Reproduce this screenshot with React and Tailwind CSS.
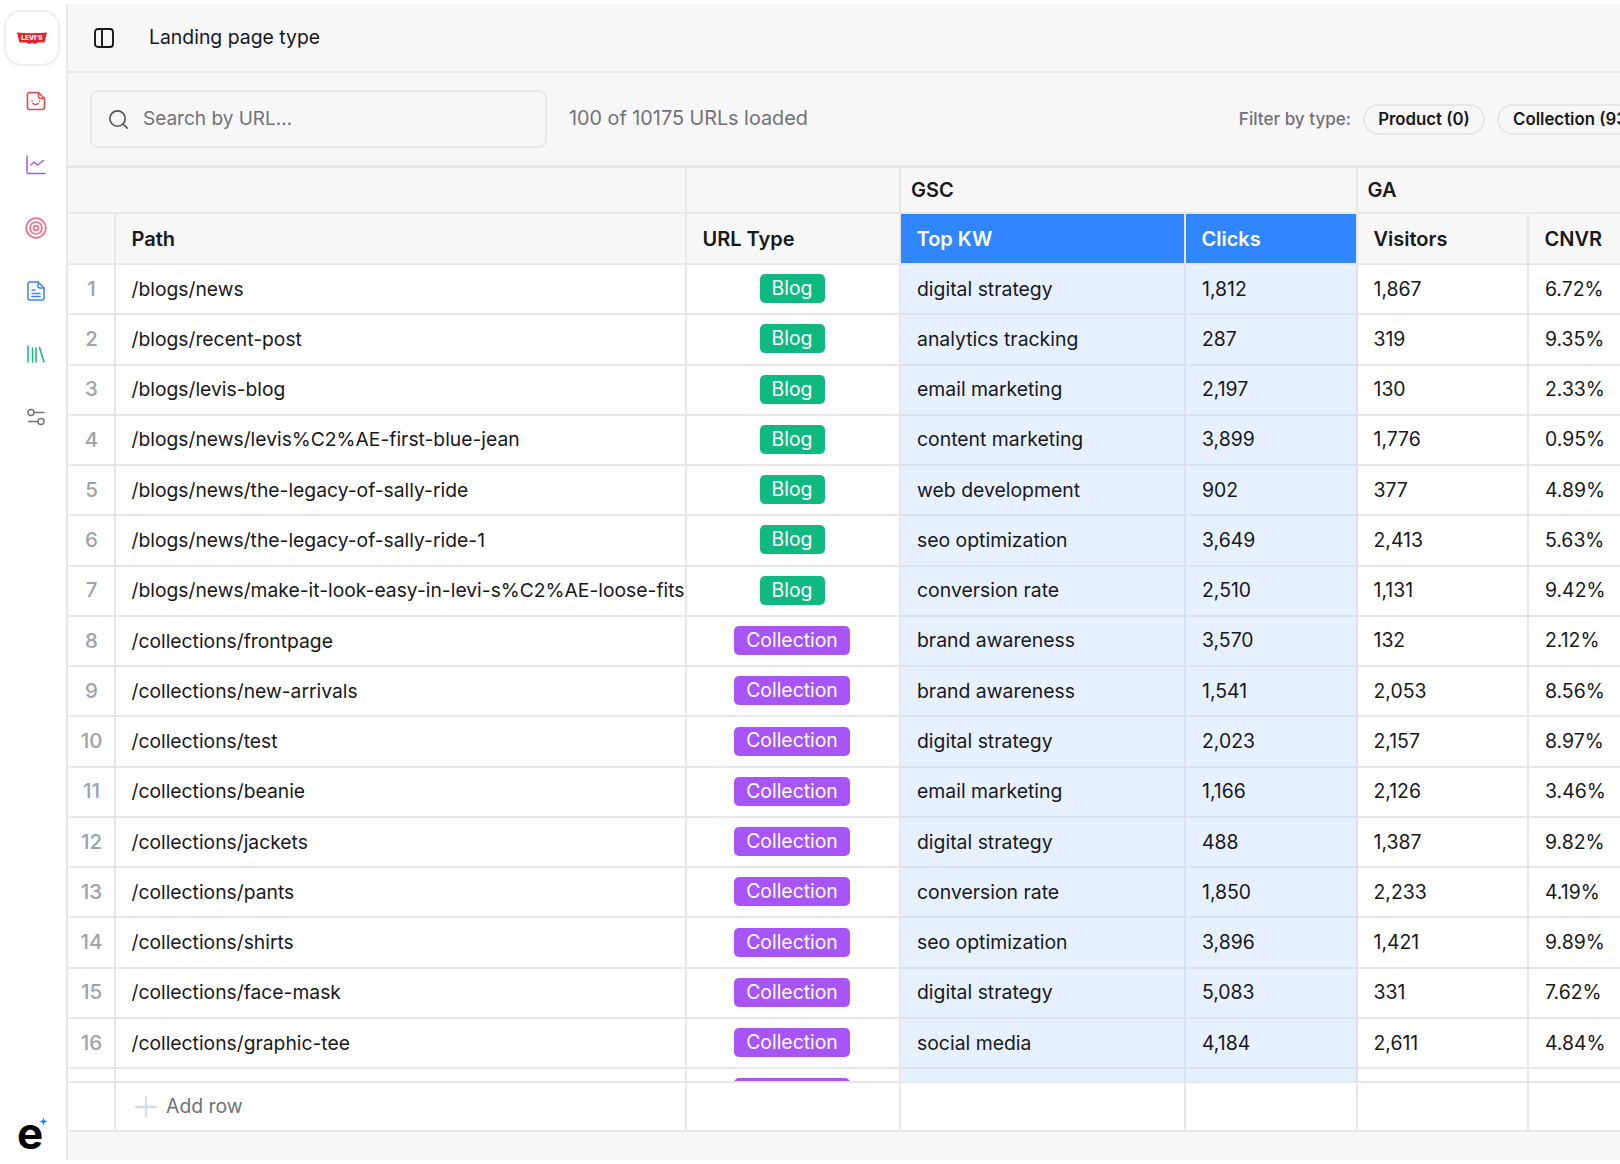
import { Search, Plus } from 'lucide-react';

const rows = [
    ['/blogs/news', 'Blog', 'digital strategy', '1,812', '1,867', '6.72%'],
    ['/blogs/recent-post', 'Blog', 'analytics tracking', '287', '319', '9.35%'],
    ['/blogs/levis-blog', 'Blog', 'email marketing', '2,197', '130', '2.33%'],
    ['/blogs/news/levis%C2%AE-first-blue-jean', 'Blog', 'content marketing', '3,899', '1,776', '0.95%'],
    ['/blogs/news/the-legacy-of-sally-ride', 'Blog', 'web development', '902', '377', '4.89%'],
    ['/blogs/news/the-legacy-of-sally-ride-1', 'Blog', 'seo optimization', '3,649', '2,413', '5.63%'],
    ['/blogs/news/make-it-look-easy-in-levi-s%C2%AE-loose-fits', 'Blog', 'conversion rate', '2,510', '1,131', '9.42%'],
    ['/collections/frontpage', 'Collection', 'brand awareness', '3,570', '132', '2.12%'],
    ['/collections/new-arrivals', 'Collection', 'brand awareness', '1,541', '2,053', '8.56%'],
    ['/collections/test', 'Collection', 'digital strategy', '2,023', '2,157', '8.97%'],
    ['/collections/beanie', 'Collection', 'email marketing', '1,166', '2,126', '3.46%'],
    ['/collections/jackets', 'Collection', 'digital strategy', '488', '1,387', '9.82%'],
    ['/collections/pants', 'Collection', 'conversion rate', '1,850', '2,233', '4.19%'],
    ['/collections/shirts', 'Collection', 'seo optimization', '3,896', '1,421', '9.89%'],
    ['/collections/face-mask', 'Collection', 'digital strategy', '5,083', '331', '7.62%'],
    ['/collections/graphic-tee', 'Collection', 'social media', '4,184', '2,611', '4.84%'],
    ['', 'Collection', '', '', '', ''],
];

function Badge({ type }) {
    if (type === 'Blog') {
        return <span className="flex h-[29px] w-[65px] items-center justify-center rounded-[5px] bg-[#10b981] text-[19.4px] text-white">Blog</span>;
    }
    return <span className="flex h-[29px] w-[116px] items-center justify-center rounded-[5px] bg-[#a855f7] text-[19.4px] text-white">Collection</span>;
}

function Row({ row, index }) {
    return (
        <div className="flex h-[50.28px] shrink-0 items-stretch bg-white text-[19.4px] text-[#18181b]">
            <div className="flex w-[47px] shrink-0 items-center justify-center border-r-2 border-b-2 border-[#e7e7e7] text-[20.5px] font-medium text-[#a1a1aa]">{index + 1}</div>
            <div className="flex w-[571px] shrink-0 items-center overflow-hidden whitespace-nowrap border-r-2 border-b-2 border-[#e7e7e7] pl-[15.5px] text-[19.3px]">{row[0]}</div>
            <div className="flex w-[214px] shrink-0 items-center justify-center border-r-2 border-b-2 border-[#e7e7e7] pr-[2px] pb-[1px]"><Badge type={row[1]} /></div>
            <div className="flex w-[285px] shrink-0 items-center border-r-2 border-b-2 border-[#d8e2f2] bg-[#e6f0ff] pl-[16px]">{row[2]}</div>
            <div className="flex w-[172px] shrink-0 items-center border-r-2 border-b-2 border-[#d8e2f2] bg-[#e6f0ff] pl-[16px]">{row[3]}</div>
            <div className="flex w-[171px] shrink-0 items-center border-r-2 border-b-2 border-[#e7e7e7] pl-[15.5px]">{row[4]}</div>
            <div className="flex w-[120px] shrink-0 items-center border-b-2 border-[#e7e7e7] pl-[16px]">{row[5]}</div>
        </div>
    );
}

function Sidebar() {
    return (
        <aside className="flex w-[66px] shrink-0 flex-col bg-white pt-[10px]">
            <div className="ml-[4px] flex h-[56px] w-[56px] items-center justify-center rounded-[17px] border-2 border-[#eeeeee] bg-white">
                <svg width="30" height="13" viewBox="0 0 30 13">
                    <path d="M0 0.5 Q15 2 30 0.5 L27.5 10.5 L21 10.5 L18 12 L15.5 10.8 L12 12 L9 10.5 L2.5 10.5 Z" fill="#e0242c" />
                    <text x="15" y="8.2" textAnchor="middle" fontSize="6.6" fontWeight="800" fill="#fff" fontFamily="Inter, sans-serif">LEVI'S</text>
                </svg>
            </div>
            <div className="flex flex-col items-center pl-[6px]">
                <svg className="mt-[25px]" width="20" height="20" viewBox="0 0 20 20" fill="none" stroke="#e5484d" strokeWidth="1.6" strokeLinejoin="round" strokeLinecap="round">
                    <path d="M3.5 1.5h9l6 6v9a2 2 0 0 1-2 2h-13a2 2 0 0 1-2-2v-13a2 2 0 0 1 2-2z" />
                    <path d="M12.5 1.5v4a2 2 0 0 0 2 2h4" />
                    <path d="M7 12.5c1.3 1.2 3.7 1.2 5 0M6 10v.2M13.5 10v.2" />
                </svg>
                <svg className="mt-[43.6px]" width="20" height="20" viewBox="0 0 20 20" fill="none" stroke="#a855f7" strokeWidth="1.5" strokeLinejoin="round" strokeLinecap="round">
                    <path d="M1 1v16a1.5 1.5 0 0 0 1.5 1.5H19" />
                    <path d="M5 10l3-3 3.5 3 6-4.5" />
                </svg>
                <svg className="mt-[42.4px]" width="22" height="22" viewBox="0 0 22 22" fill="none" stroke="#f0708c" strokeWidth="1.7">
                    <circle cx="11" cy="11" r="9.8" />
                    <circle cx="11" cy="11" r="6" />
                    <circle cx="11" cy="11" r="2.4" />
                </svg>
                <svg className="mt-[41.6px]" width="18" height="20" viewBox="0 0 18 20" fill="none" stroke="#3b82f6" strokeWidth="1.5" strokeLinejoin="round" strokeLinecap="round">
                    <path d="M3 1h8l6 6v10a2 2 0 0 1-2 2H3a2 2 0 0 1-2-2V3a2 2 0 0 1 2-2z" />
                    <path d="M11 1v4a2 2 0 0 0 2 2h4M5 9h3M5 12.5h8M5 15.5h8" />
                </svg>
                <svg className="mt-[44.4px]" width="18" height="18" viewBox="0 0 18 18" fill="none" stroke="#10b981" strokeWidth="1.5" strokeLinecap="round">
                    <path d="M1 1v16M5.5 3v14M9 3v14M12.5 2.5L17 17" />
                </svg>
                <svg className="mt-[45px]" width="18" height="18" viewBox="0 0 18 18" fill="none" stroke="#71717a" strokeWidth="1.4" strokeLinecap="round">
                    <circle cx="4" cy="4.5" r="3" />
                    <path d="M7 4.5h10M1.5 13.5h10" />
                    <circle cx="14" cy="13.5" r="3" />
                </svg>
            </div>
            <div className="relative mt-auto mb-[9px] ml-[17px] h-[44px] w-[30px] text-[44px] font-bold leading-[44px] text-black">
                e
                <svg className="absolute top-[6px] left-[22px]" width="9" height="9" viewBox="0 0 10 10">
                    <path d="M5 0C5.5 3.5 6.5 4.5 10 5C6.5 5.5 5.5 6.5 5 10C4.5 6.5 3.5 5.5 0 5C3.5 4.5 4.5 3.5 5 0Z" fill="#2b7fff" />
                </svg>
            </div>
        </aside>
    );
}

export default function App() {
    return (
        <div className="flex h-[1164px] w-[1620px] overflow-hidden bg-white font-['Inter',sans-serif] text-[#18181b]">
            <Sidebar />
            <main className="mt-[4px] mb-[4px] flex min-w-0 flex-1 flex-col border-l-2 border-[#e7e7e7] bg-[#f7f7f7]">
                <header className="flex h-[69px] shrink-0 items-center border-b-2 border-[#e7e7e7] pl-[25px]">
                    <svg width="22" height="20" viewBox="0 0 22 20" fill="none" stroke="#18181b" strokeWidth="1.9">
                        <rect x="2" y="1" width="18" height="18" rx="3" />
                        <path d="M9 1v18" />
                    </svg>
                    <span className="ml-[34px] text-[19.4px]">Landing page type</span>
                </header>

                <div className="flex h-[94.5px] shrink-0 items-center border-b-[3px] border-[#e7e7e7] pt-[1px] pl-[22px]">
                    <div className="flex h-[58px] w-[457px] shrink-0 items-center rounded-[8px] border-2 border-[#e7e7e7] pl-[15px] text-[19px] text-[#71717a]">
                        <Search size={23} strokeWidth={1.7} className="text-[#52525b]" />
                        <span className="ml-[13px]">Search by URL…</span>
                    </div>
                    <span className="ml-[22px] shrink-0 text-[19.8px] text-[#71717a]">100 of 10175 URLs loaded</span>
                    <span className="ml-[431px] shrink-0 text-[17.1px] font-medium text-[#71717a]">Filter by type:</span>
                    <span className="ml-[12px] flex h-[31px] w-[122px] shrink-0 items-center justify-center rounded-full border-2 border-[#e7e7e7] text-[16.8px] font-semibold">Product (0)</span>
                    <span className="ml-[12px] flex h-[31px] shrink-0 items-center rounded-full border-2 border-[#e7e7e7] px-[14px] text-[16.8px] font-semibold whitespace-nowrap">Collection (93)</span>
                </div>

                <div className="ml-[1px] flex w-[1552px] shrink-0 flex-col border-b-2 border-[#e7e7e7] bg-white">
                    <div className="flex h-[46.5px] shrink-0 border-b-2 border-[#e7e7e7] bg-[#f7f7f7] text-[20px] font-semibold">
                        <div className="w-[618px] shrink-0 border-r-2 border-[#e7e7e7]" />
                        <div className="w-[214px] shrink-0 border-r-2 border-[#e7e7e7]" />
                        <div className="flex w-[457px] shrink-0 items-center border-r-2 border-[#e7e7e7] pl-[10px]">GSC</div>
                        <div className="flex w-[291px] shrink-0 items-center pl-[9.5px]">GA</div>
                    </div>
                    <div className="flex h-[51px] shrink-0 border-b-2 border-[#e7e7e7] bg-[#f7f7f7] text-[20px] font-semibold">
                        <div className="w-[47px] shrink-0 border-r-2 border-[#e7e7e7]" />
                        <div className="flex w-[571px] shrink-0 items-center border-r-2 border-[#e7e7e7] pl-[15.5px]">Path</div>
                        <div className="flex w-[214px] shrink-0 items-center border-r-2 border-[#e7e7e7] pl-[15.5px]">URL Type</div>
                        <div className="flex w-[285px] shrink-0 items-center border-r-2 border-[#e7e7e7] bg-[#2f86ff] pl-[15.5px] text-white">Top KW</div>
                        <div className="flex w-[172px] shrink-0 items-center border-r-2 border-[#e7e7e7] bg-[#2f86ff] pl-[15.5px] text-white">Clicks</div>
                        <div className="flex w-[171px] shrink-0 items-center border-r-2 border-[#e7e7e7] pl-[15.5px]">Visitors</div>
                        <div className="flex w-[120px] shrink-0 items-center pl-[15.5px]">CNVR</div>
                    </div>
                    <div className="flex h-[816px] shrink-0 flex-col overflow-hidden">
                        {rows.map((row, i) => <Row key={i} row={row} index={i} />)}
                    </div>
                    <div className="flex h-[49px] shrink-0 border-t-2 border-[#e7e7e7] text-[19.4px]">
                        <div className="w-[47px] shrink-0 border-r-2 border-[#e7e7e7]" />
                        <div className="flex w-[571px] shrink-0 items-center border-r-2 border-[#e7e7e7] pl-[13px] text-[#71717a]">
                            <Plus size={34} strokeWidth={1.6} className="text-[#d4dae8]" />
                            <span className="ml-[3px]">Add row</span>
                        </div>
                        <div className="w-[214px] shrink-0 border-r-2 border-[#e7e7e7]" />
                        <div className="w-[285px] shrink-0 border-r-2 border-[#e7e7e7]" />
                        <div className="w-[172px] shrink-0 border-r-2 border-[#e7e7e7]" />
                        <div className="w-[171px] shrink-0 border-r-2 border-[#e7e7e7]" />
                        <div className="w-[120px] shrink-0" />
                    </div>
                </div>
            </main>
        </div>
    );
}
